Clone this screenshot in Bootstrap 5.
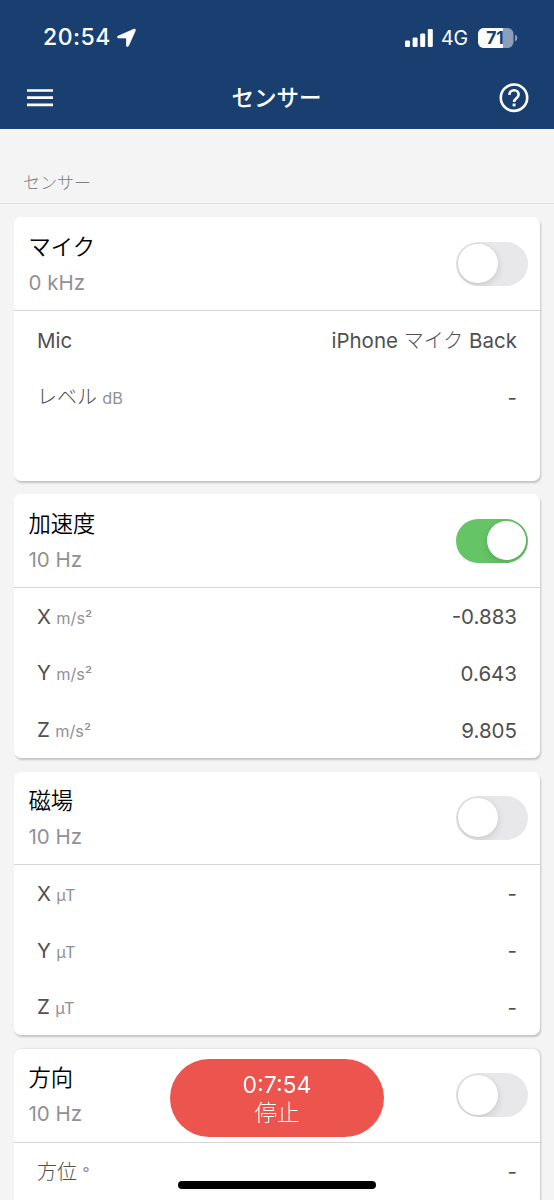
<!DOCTYPE html>
<html lang="ja">
<head>
<meta charset="utf-8">
<meta name="viewport" content="width=device-width, initial-scale=1">
<title>センサー</title>
<link href="https://cdn.jsdelivr.net/npm/bootstrap@5.3.0/dist/css/bootstrap.min.css" rel="stylesheet">
<style>
  html, body { height: 1200px; overflow: hidden; }
  body { background: #f4f4f4; font-family: Inter, "Noto Sans CJK JP", sans-serif; color: #505050; }
  .app-top { background: #193f70; height: 129px; color: #fff; }
  .status-row { height: 74px; padding: 1px 36px 0 43px; }
  .clock { font-size: 23px; font-weight: 500; line-height: 1; letter-spacing: .5px; }
  .net { font-size: 19.5px; line-height: 1; letter-spacing: -.1px; padding-top: 2px; }
  .title-row { height: 48px; padding: 0 25px 0 26px; }
  .title-text { font-size: 22.5px; font-weight: 500; line-height: 1; padding-top: 1px; }
  .section-label { height: 75px; border-bottom: 1.5px solid #dfdfdf; padding: 0 23px 10px; font-size: 17px; line-height: 20px; color: #7e7e82; font-weight: 300; }
  .sensors { padding: 13px 14px 0; gap: 13.7px; height: 996px; }
  .sensor { border: 0; border-radius: 7px; box-shadow: 1px 2px 2px rgba(0,0,0,.2); height: 263.6px; flex: none; color: inherit; }
  .sensor:last-child { height: 151px; border-radius: 7px 7px 0 0; box-shadow: 1px 0 2px rgba(0,0,0,.2); }
  .sensor-head { height: 94px; border-bottom: 1.5px solid #d5d5d7; padding: 0 12px 0 14.5px; }
  .sensor-name { font-size: 22.3px; line-height: 30px; color: #000; margin-top: 0; font-weight: 350; }
  .rate { font-size: 20.5px; line-height: 26px; color: #919195; margin-top: 8px; font-weight: 400; }
  .reading { height: 57px; padding: 2px 23px 0; font-size: 20.5px; line-height: 28px; font-weight: 400; }
  .jp { font-size: 20px; font-weight: 300; }
  .unit { font-size: 16.3px; color: #919195; font-weight: 400; margin-left: -.5px; }
  .toggle { width: 72px; height: 44px; border-radius: 22px; background: #e8e8ea; padding: 2px; overflow: hidden; }
  .toggle i { display: block; width: 39.5px; height: 39.5px; border-radius: 50%; background: #fff; box-shadow: 0 3px 9px rgba(0,0,0,.12), 0 0 2px rgba(0,0,0,.1); }
  .toggle.on { background: #65c466; }
  .toggle.on i { margin-left: auto; }
  .stop-btn { left: 170px; top: 1059px; width: 214px; height: 78px; border-radius: 39px; background: #eb554d; color: #fff; border: 0; font-size: 23px; line-height: 28px; padding: 2px 0 0; font-weight: 400; }
  .stop-btn small { font-size: 22.5px; font-weight: 300; }
  .home-bar { left: 178px; top: 1181px; width: 198px; height: 7.5px; border-radius: 4px; background: #000; }
</style>
</head>
<body>
<header class="app-top">
  <div class="status-row d-flex align-items-center justify-content-between">
    <div class="d-flex align-items-center">
      <span class="clock">20:54</span>
      <svg class="ms-1" width="22" height="20" viewBox="-2 0 22 20"><path d="M1 8.2 17 1.2q1.8-.4 1.3 1.4L11.4 18q-1.4 1.4-1.9-.2V9.9H1.2Q-.5 9.2 1 8.2Z" fill="#fff" stroke="#fff" stroke-width=".8" stroke-linejoin="round"/></svg>
    </div>
    <div class="d-flex align-items-center">
      <svg width="28" height="18" viewBox="0 0 28 18" fill="#fff"><rect x="0" y="11.5" width="5" height="6.5" rx="1.3"/><rect x="7.6" y="8.5" width="5" height="9.5" rx="1.3"/><rect x="15.2" y="4.5" width="5" height="13.5" rx="1.3"/><rect x="22.8" y="0" width="5" height="18" rx="1.3"/></svg>
      <span class="net ms-2">4G</span>
      <svg style="margin-left:10px" width="40" height="20" viewBox="0 0 40 20"><defs><clipPath id="cell"><rect width="35.5" height="20" rx="6"/></clipPath></defs><g clip-path="url(#cell)"><rect width="36" height="20" fill="#8c9fb8"/><rect width="25" height="20" fill="#fff"/></g><path d="M37 6.5q2.4 1.2 2.4 3.5T37 13.5Z" fill="#8c9fb8"/><text x="17" y="16.1" text-anchor="middle" font-family="Inter, sans-serif" font-size="17.5" font-weight="700" fill="#193f70">71</text></svg>
    </div>
  </div>
  <div class="title-row d-flex align-items-center justify-content-between">
    <svg width="28" height="20" viewBox="0 0 28 20"><path d="M1 2.5h26M1 9.7h26M1 16.9h26" stroke="#fff" stroke-width="2.7"/></svg>
    <span class="title-text">センサー</span>
    <svg width="30" height="30" viewBox="0 0 30 30" fill="none" stroke="#fff"><circle cx="15" cy="14.7" r="13.2" stroke-width="2.6"/><path d="M10.4 11.9c0-2.8 2-4.6 4.6-4.6s4.6 1.8 4.6 4.4c0 3.4-4.5 3.6-4.5 7.2" stroke-width="2.6"/><path d="M15.1 20.5v2.9" stroke-width="2.9"/></svg>
  </div>
</header>
<div class="section-label d-flex align-items-end">センサー</div>
<main class="sensors d-flex flex-column">
  <section class="card sensor">
    <div class="sensor-head d-flex align-items-center justify-content-between"><div><div class="sensor-name">マイク</div><div class="rate">0 kHz</div></div><div class="toggle"><i></i></div></div>
    <div class="reading d-flex align-items-center justify-content-between"><span>Mic</span><span>iPhone <span class="jp">マイク</span> Back</span></div>
    <div class="reading d-flex align-items-center justify-content-between"><span><span class="jp">レベル</span> <span class="unit">dB</span></span><span>-</span></div>
  </section>
  <section class="card sensor">
    <div class="sensor-head d-flex align-items-center justify-content-between"><div><div class="sensor-name">加速度</div><div class="rate">10 Hz</div></div><div class="toggle on"><i></i></div></div>
    <div class="reading d-flex align-items-center justify-content-between"><span>X <span class="unit">m/s²</span></span><span>-0.883</span></div>
    <div class="reading d-flex align-items-center justify-content-between"><span>Y <span class="unit">m/s²</span></span><span>0.643</span></div>
    <div class="reading d-flex align-items-center justify-content-between"><span>Z <span class="unit">m/s²</span></span><span>9.805</span></div>
  </section>
  <section class="card sensor">
    <div class="sensor-head d-flex align-items-center justify-content-between"><div><div class="sensor-name">磁場</div><div class="rate">10 Hz</div></div><div class="toggle"><i></i></div></div>
    <div class="reading d-flex align-items-center justify-content-between"><span>X <span class="unit">µT</span></span><span>-</span></div>
    <div class="reading d-flex align-items-center justify-content-between"><span>Y <span class="unit">µT</span></span><span>-</span></div>
    <div class="reading d-flex align-items-center justify-content-between"><span>Z <span class="unit">µT</span></span><span>-</span></div>
  </section>
  <section class="card sensor">
    <div class="sensor-head d-flex align-items-center justify-content-between"><div><div class="sensor-name">方向</div><div class="rate">10 Hz</div></div><div class="toggle"><i></i></div></div>
    <div class="reading d-flex align-items-center justify-content-between"><span><span class="jp">方位</span> <span class="unit">°</span></span><span>-</span></div>
  </section>
</main>
<button class="stop-btn position-fixed d-flex flex-column align-items-center justify-content-center"><span>0:7:54</span><small>停止</small></button>
<div class="home-bar position-fixed"></div>
<script src="https://cdn.jsdelivr.net/npm/bootstrap@5.3.0/dist/js/bootstrap.bundle.min.js"></script>
</body>
</html>
